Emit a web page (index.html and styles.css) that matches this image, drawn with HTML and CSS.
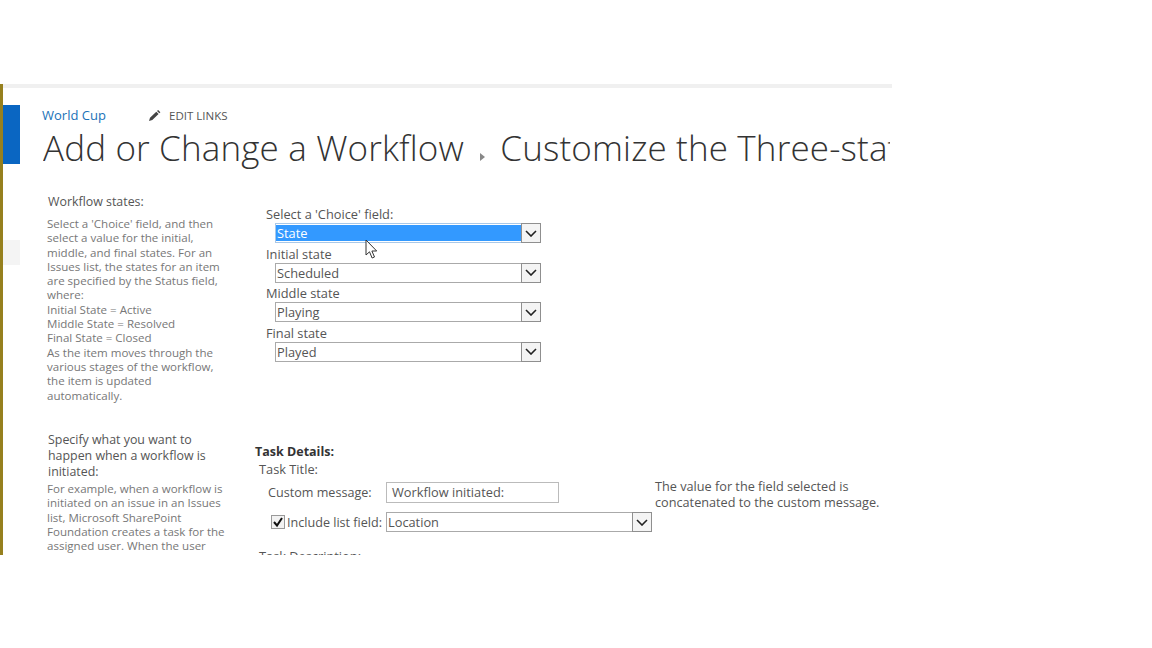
FILE: index.html
```html
<!DOCTYPE html>
<html lang="en">
<head>
  <meta charset="UTF-8">
  <title>Customize the Three-state Workflow</title>
  <link rel="stylesheet" href="styles.css">
</head>
<body>
  <div class="page">
    <div class="topline"></div>
    <div class="body">
      <div class="rail">
        <div class="rail-accent"></div>
        <div class="rail-item"></div>
      </div>
      <div class="main">
        <div class="site-row">
          <a class="site-link">World Cup</a>
          <span class="edit-links">
            <svg class="pencil" width="12" height="11" viewBox="0 0 12 11"><path d="M0 11l1-3.200 6.300-6 2.300 2.200-6.300 6zM8 1.100L9.100 0l2.300 2.200-1.100 1.100z" fill="#444"/></svg>
            EDIT LINKS
          </span>
        </div>
        <h1 class="title">Add or Change a Workflow <span class="crumb-sep"></span> Customize the Three-state Workflow</h1>

        <div class="section section-states">
          <div class="desc">
            <h2>Workflow states:</h2>
            <p>Select a 'Choice' field, and then select a value for the initial, middle, and final states. For an Issues list, the states for an item are specified by the Status field, where:<br>Initial State = Active<br>Middle State = Resolved<br>Final State = Closed<br>As the item moves through the various stages of the workflow, the item is updated automatically.</p>
          </div>
          <div class="fields">
            <label>Select a 'Choice' field:</label>
            <div class="select select-active"><span class="value">State</span><span class="arrow"><svg width="12" height="7" viewBox="0 0 12 7"><path d="M1 1l5 5 5-5" fill="none" stroke="#222" stroke-width="1.600"/></svg></span></div>
            <label>Initial state</label>
            <div class="select"><span class="value">Scheduled</span><span class="arrow"><svg width="12" height="7" viewBox="0 0 12 7"><path d="M1 1l5 5 5-5" fill="none" stroke="#222" stroke-width="1.600"/></svg></span></div>
            <label>Middle state</label>
            <div class="select"><span class="value">Playing</span><span class="arrow"><svg width="12" height="7" viewBox="0 0 12 7"><path d="M1 1l5 5 5-5" fill="none" stroke="#222" stroke-width="1.600"/></svg></span></div>
            <label>Final state</label>
            <div class="select"><span class="value">Played</span><span class="arrow"><svg width="12" height="7" viewBox="0 0 12 7"><path d="M1 1l5 5 5-5" fill="none" stroke="#222" stroke-width="1.600"/></svg></span></div>
          </div>
        </div>

        <div class="section section-task">
          <div class="desc">
            <h2>Specify what you want to happen when a workflow is initiated:</h2>
            <p>For example, when a workflow is initiated on an issue in an Issues list, Microsoft SharePoint Foundation creates a task for the assigned user. When the user completes the task, the workflow moves to the next state.</p>
          </div>
          <div class="task">
            <div class="task-head">Task Details:</div>
            <div class="task-sub">Task Title:</div>
            <div class="task-row">
              <div class="task-form">
                <div class="msg-row">
                  <span class="msg-label">Custom message:</span>
                  <span class="textbox">Workflow initiated:</span>
                </div>
                <div class="field-row">
                  <span class="check"><svg width="12" height="12" viewBox="0 0 12 12"><path d="M2 6l3 3.500L10 2" fill="none" stroke="#111" stroke-width="2"/></svg></span>
                  <span class="check-label">Include list field:</span>
                  <div class="select select-wide"><span class="value">Location</span><span class="arrow"><svg width="12" height="7" viewBox="0 0 12 7"><path d="M1 1l5 5 5-5" fill="none" stroke="#222" stroke-width="1.600"/></svg></span></div>
                </div>
              </div>
              <p class="note">The value for the field selected is concatenated to the custom message.</p>
            </div>
            <div class="task-sub task-desc">Task Description:</div>
          </div>
        </div>
      </div>
    </div>
    <svg class="cursor" width="14" height="21" viewBox="0 0 14 21"><path d="M1 1v15l3.500-3.200 2.600 6.200 2.400-1-2.600-6h4.800z" fill="#fff" stroke="#333" stroke-width="1"/></svg>
  </div>
</body>
</html>
```

FILE: styles.css
```css
body {
  font-family: "Open Sans", "Liberation Sans", sans-serif;
  background-color: #fff;
  margin: 0;
  padding: 0;
  color: #444;
}
.page {
  position: relative;
  width: 889px;
  height: 471px;
  margin-top: 84px;
  border-left: 3px solid #96801e;
  overflow: hidden;
}
.topline {
  height: 4px;
  background: #f0f0f0;
}
.body {
  display: flex;
}
.rail {
  width: 17px;
  flex: none;
  padding-top: 17px;
}
.rail-accent {
  height: 59px;
  background: #0a66c2;
}
.rail-item {
  height: 25px;
  margin-top: 76px;
  background: #f4f4f4;
}
.main {
  flex: 1;
  min-width: 0;
  padding-left: 22px;
}
.site-row {
  display: flex;
  align-items: center;
  height: 18px;
  margin-top: 18px;
  font-size: 13px;
}
.site-link {
  color: #1a72b8;
  width: 107px;
}
.edit-links {
  display: flex;
  align-items: center;
  gap: 8px;
  font-size: 11.500px;
  color: #555;
}
.title {
  margin: 0 2px 0 1px;
  font-size: 35px;
  font-weight: 300;
  letter-spacing: 0.150px;
  line-height: 48px;
  color: #333;
  white-space: nowrap;
  overflow: hidden;
}
.crumb-sep {
  display: inline-block;
  width: 0;
  height: 0;
  margin: 0 6px 0 7px;
  border-left: 5px solid #888;
  border-top: 4px solid transparent;
  border-bottom: 4px solid transparent;
}
.section {
  display: flex;
}
.desc {
  width: 178px;
  flex: none;
  margin-left: 5px;
}
.desc h2 {
  margin: 0 0 2px 1px;
  font-size: 12.400px;
  font-weight: 400;
  line-height: 16px;
  color: #555;
}
.desc p {
  margin: 0;
  font-size: 11.550px;
  line-height: 14.300px;
  color: #777;
}
.section-states {
  height: 238px;
  margin-top: 22px;
}
.section-states .desc h2 {
  margin-bottom: 7px;
}
.fields {
  margin-left: 41px;
  padding-top: 12px;
}
.fields label {
  display: block;
  font-size: 12.800px;
  line-height: 16px;
  color: #555;
}
.select {
  display: flex;
  align-items: center;
  width: 266px;
  height: 20px;
  margin: 1px 0 2.600px 9px;
  border: 1px solid #aaa;
  box-sizing: border-box;
  background: #fff;
  font-size: 12.800px;
  color: #555;
}
.value {
  flex: 1;
  padding-left: 1px;
}
.arrow {
  display: flex;
  align-items: center;
  justify-content: center;
  width: 20px;
  height: 20px;
  margin: -1px -1px -1px 0;
  flex: none;
  border: 1px solid #8f8f8f;
  box-sizing: border-box;
  background: #f4f4f4;
}
.select-active {
  border-color: #a9c8e8;
}
.select-active .value {
  background: #3399ff;
  color: #fff;
  line-height: 16px;
}
.select-wide {
  margin: 0;
}
.task {
  margin-left: 30px;
  padding-top: 11px;
  flex: 1;
  min-width: 0;
}
.task-head {
  font-size: 12.500px;
  font-weight: 700;
  line-height: 17px;
  color: #333;
}
.task-sub {
  margin: 1px 0 0 4px;
  font-size: 12.800px;
  line-height: 16px;
  color: #555;
}
.task-row {
  display: flex;
  margin-top: 5px;
}
.task-form {
  width: 397px;
  flex: none;
}
.msg-row {
  display: flex;
  align-items: center;
  padding-left: 13px;
}
.msg-label {
  width: 118px;
  font-size: 12.600px;
  color: #555;
}
.textbox {
  width: 173px;
  height: 21px;
  padding-left: 5px;
  border: 1px solid #bbb;
  box-sizing: border-box;
  font-size: 12.800px;
  line-height: 19px;
  color: #555;
}
.field-row {
  display: flex;
  align-items: center;
  margin-top: 9px;
  padding-left: 16px;
}
.check {
  display: flex;
  align-items: center;
  justify-content: center;
  width: 14px;
  height: 14px;
  flex: none;
  border: 1px solid #999;
  box-sizing: border-box;
  background: #f2f2f2;
}
.check-label {
  width: 99px;
  margin-left: 2px;
  font-size: 12.600px;
  color: #555;
}
.note {
  width: 236px;
  margin: -4px 0 0 3px;
  font-size: 12.700px;
  line-height: 16px;
  color: #555;
}
.task-desc {
  margin-top: 16px;
}
.cursor {
  position: absolute;
  left: 362px;
  top: 155px;
}
```
